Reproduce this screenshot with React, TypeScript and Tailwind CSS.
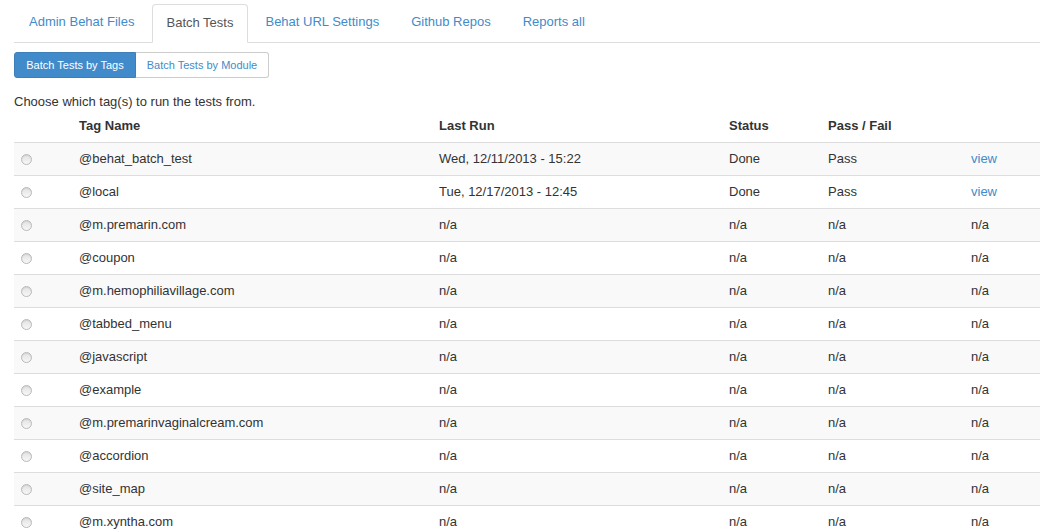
import React from "react";

const rows: [string, string, string, string, boolean][] = [
  ["@behat_batch_test", "Wed, 12/11/2013 - 15:22", "Done", "Pass", true],
  ["@local", "Tue, 12/17/2013 - 12:45", "Done", "Pass", true],
  ["@m.premarin.com", "n/a", "n/a", "n/a", false],
  ["@coupon", "n/a", "n/a", "n/a", false],
  ["@m.hemophiliavillage.com", "n/a", "n/a", "n/a", false],
  ["@tabbed_menu", "n/a", "n/a", "n/a", false],
  ["@javascript", "n/a", "n/a", "n/a", false],
  ["@example", "n/a", "n/a", "n/a", false],
  ["@m.premarinvaginalcream.com", "n/a", "n/a", "n/a", false],
  ["@accordion", "n/a", "n/a", "n/a", false],
  ["@site_map", "n/a", "n/a", "n/a", false],
  ["@m.xyntha.com", "n/a", "n/a", "n/a", false],
];

const grid = "grid grid-cols-[57px_360px_290px_99px_143px_1fr]";

function Radio() {
  return (
    <span className="block w-[11px] h-[11px] rounded-full border border-[#b9b9b9] bg-gradient-to-b from-[#e2e2e2] to-[#f7f7f7] shadow-[inset_0_1px_1px_rgba(0,0,0,0.08)]" />
  );
}

export default function App() {
  return (
    <div
      className="bg-white w-[1044px] h-[532px] overflow-hidden pl-[14px] pr-[4px] text-[13px] text-[#333]"
      style={{ fontFamily: '"Liberation Sans", Arial, Helvetica, sans-serif' }}
    >
      <ul className="flex border-b border-[#ddd] pt-[4px] h-[43px]">
        {["Admin Behat Files", "Batch Tests", "Behat URL Settings", "Github Repos", "Reports all"].map((t) =>
          t === "Batch Tests" ? (
            <li key={t} className="mr-[2px] -mb-px">
              <span className="flex items-center h-[39px] px-[14px] border border-[#ddd] border-b-white rounded-t-[4px] bg-white text-[#555] pb-[2px]">
                {t}
              </span>
            </li>
          ) : (
            <li key={t} className="mr-[2px]">
              <span className="flex items-center h-[38px] px-[15px] text-[#428bca] pb-[2px]">{t}</span>
            </li>
          )
        )}
      </ul>
      <div className="flex mt-[9px] text-[11px] h-[26px]">
        <span className="flex items-center px-[10px] bg-[#428bca] border border-[#3c7fb9] text-white rounded-l-[3px] w-[122px] justify-center">
          Batch Tests by Tags
        </span>
        <span className="flex items-center px-[10px] border border-l-0 border-[#ccc] text-[#428bca] rounded-r-[3px] w-[133px] justify-center">
          Batch Tests by Module
        </span>
      </div>
      <p className="mt-[16px] leading-[16px]">Choose which tag(s) to run the tests from.</p>
      <div>
        <div className={`${grid} h-[33px] items-center font-bold border-b border-[#ddd]`}>
          <span />
          <span className="px-2">Tag Name</span>
          <span className="px-2">Last Run</span>
          <span className="px-2">Status</span>
          <span className="px-2">Pass / Fail</span>
          <span />
        </div>
        {rows.map(([tag, last, status, pf, link], i) => (
          <div
            key={tag}
            className={`${grid} h-[33px] items-center border-b border-[#ddd] ${i % 2 === 0 ? "bg-[#f9f9f9]" : "bg-white"}`}
          >
            <span className="pl-[7px]">
              <Radio />
            </span>
            <span className="px-2">{tag}</span>
            <span className="px-2">{last}</span>
            <span className="px-2">{status}</span>
            <span className="px-2">{pf}</span>
            <span className={`px-2 ${link ? "text-[#428bca]" : ""}`}>{link ? "view" : "n/a"}</span>
          </div>
        ))}
      </div>
    </div>
  );
}
